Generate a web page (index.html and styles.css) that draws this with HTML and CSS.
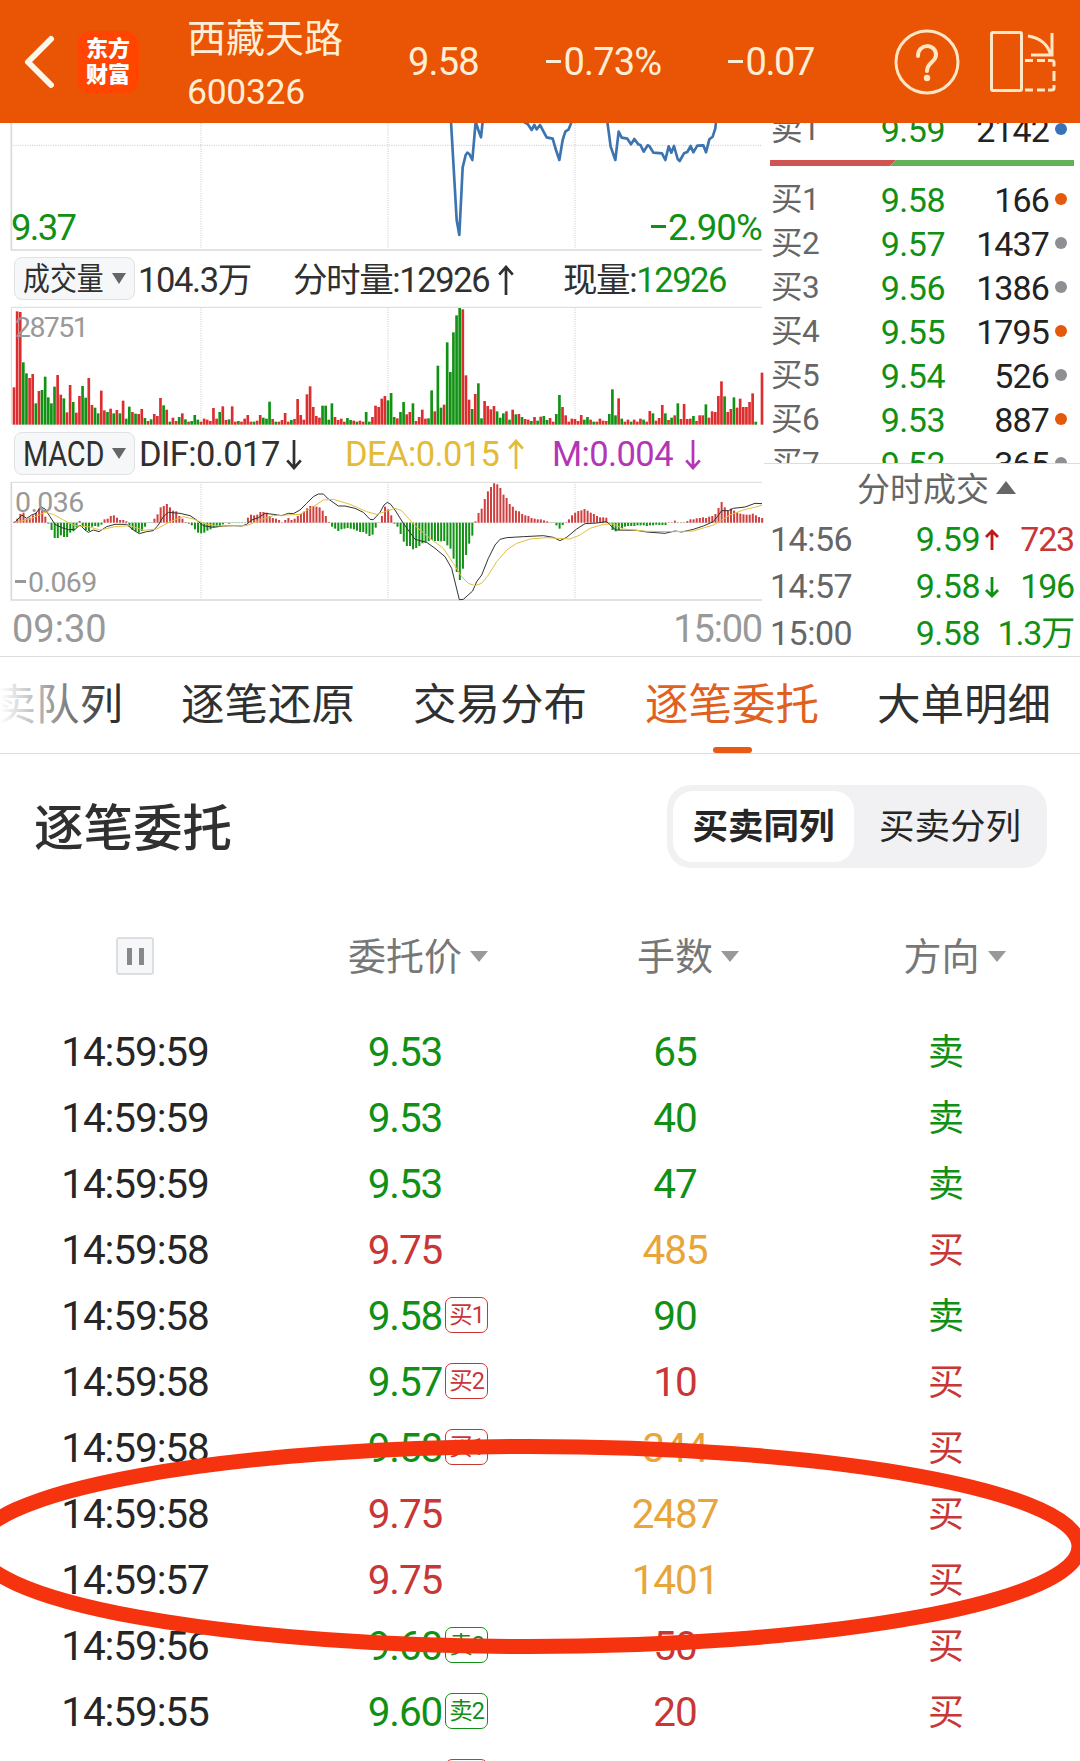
FILE: index.html
```html
<!DOCTYPE html>
<html lang="zh-CN">
<head>
    <meta charset="UTF-8">
    <meta name="viewport" content="width=device-width, initial-scale=1.0">
    <title>西藏天路 600326</title>
    <link rel="stylesheet" href="styles.css">
</head>
<body>
    <header class="header">
        <svg class="back" width="32" height="54" viewBox="0 0 32 54"><path d="M28 4 L5 27 L28 50"/></svg>
        <div class="logo"><span>东方</span><span>财富</span></div>
        <div class="stock">
            <div class="stock-name">西藏天路</div>
            <div class="stock-code">600326</div>
        </div>
        <div class="quote">
            <span class="q-price">9.58</span>
            <span class="q-pct"><i class="minus"></i>0.73%</span>
            <span class="q-diff"><i class="minus"></i>0.07</span>
        </div>
        <svg class="help" width="66" height="66" viewBox="0 0 66 66">
            <circle cx="33" cy="33" r="31"/>
            <path d="M24 27 C24 14 42 14 42 26 C42 33 33 33 33 42"/>
            <circle class="dot" cx="33" cy="49" r="3.2"/>
        </svg>
        <svg class="rotate" width="68" height="62" viewBox="0 0 68 62">
            <rect x="1.5" y="1.5" width="30" height="58" rx="1.5"/>
            <path d="M38 5 Q57 8 61 25 M62 2 V24 H41"/>
            <path d="M35 29.5 h8 M47 29.5 h8 M58 29.5 h4 q2 0 2 2 v4 M64 40 v10 M64 54 v3 q0 2 -2 2 h-4 M55 59 h-8 M43 59 h-8"/>
        </svg>
    </header>

    <section class="market">
        <div class="charts">
            <div class="chart price-chart">
                <svg width="764" height="128" viewBox="0 0 2292 384">
                    <g class="grid">
                        <path class="dotted" d="M33 67 H2286 M603 0 V378 M1164 0 V378 M1725 0 V378"/>
                        <path class="frame" d="M34 0 V381 H2286"/>
                    </g>
                    <g class="price-line" transform="translate(1140 -9)">
                        <path d="M213 5 L230 300 L238 345 L248 142 L257 105 L262 98 L268 102 L277 120 L287 5 L295 30 L303 52 L308 5"/>
                        <path d="M430 5 L443 12 L455 30 L463 15 L470 28 L480 15 L500 52 L518 56 L528 90 L538 120 L548 60 L556 35 L566 28 L575 5"/>
                        <path d="M682 5 L692 80 L706 120 L716 35 L725 53 L742 56 L753 73 L763 57 L775 73 L782 76 L791 95 L803 76 L808 78 L820 98 L846 100 L856 120 L866 79 L874 98 L882 78 L893 117 L899 123 L912 100 L922 96 L932 78 L940 97 L952 77 L970 76 L978 97 L988 58 L998 50 L1006 25 L1008 5"/>
                    </g>
                </svg>
                <span class="low">9.37</span>
                <span class="low-pct"><i class="minus"></i>2.90%</span>
            </div>

            <div class="info">
                <button class="picker"><span class="picker-cn">成交量</span><i class="tri"></i></button>
                <span class="vol-total">104.3万</span>
                <span class="vol-min">分时量:12926<svg class="arr" viewBox="0 0 18 32"><path d="M9 31 V2 M2 10 L9 2 L16 10"/></svg></span>
                <span class="vol-now">现量:<b>12926</b></span>
            </div>

            <div class="chart volume-chart">
                <svg width="764" height="120" viewBox="0 0 2292 360">
                    <path class="dotted" d="M603 4 V356 M1164 4 V356 M1725 4 V356"/>
                    <path class="frame thin" d="M34 356 V4 H2286"/>
                    <g id="volume"></g>
                </svg>
                <span class="scale-top">28751</span>
            </div>

            <div class="info macd-info">
                <button class="picker"><span class="picker-en">MACD</span><i class="tri"></i></button>
                <span class="dif">DIF:0.017<svg class="arr" viewBox="0 0 18 32"><path d="M9 1 V30 M2 22 L9 30 L16 22"/></svg></span>
                <span class="dea">DEA:0.015<svg class="arr" viewBox="0 0 18 32"><path d="M9 31 V2 M2 10 L9 2 L16 10"/></svg></span>
                <span class="macd-m">M:0.004<svg class="arr" viewBox="0 0 18 32"><path d="M9 1 V30 M2 22 L9 30 L16 22"/></svg></span>
            </div>

            <div class="chart macd-chart">
                <svg width="764" height="120" viewBox="0 168 2292 360">
                    <path class="dotted" d="M603 172 V525 M1164 172 V525 M1725 172 V525"/>
                    <path class="frame thin" d="M34 172 H2286"/>
                    <path class="frame" d="M34 172 V525 H2286"/>
                    <path class="zero" d="M42 293 H2286"/>
                    <g id="macd"></g>
                    <polyline class="dif-line" points="45,292 65,270 80,280 95,270 108,265 122,245 135,252 150,275 165,298 185,308 205,314 225,313 240,300 255,315 265,322 280,315 297,320 320,305 345,298 380,298 400,315 418,326 440,320 460,317 475,300 490,275 505,262 540,265 570,272 590,285 610,302 640,307 670,303 700,302 725,303 740,298 755,285 775,278 795,265 820,268 845,272 865,265 880,266 900,255 920,235 940,215 955,207 970,207 985,222 1015,243 1035,243 1065,250 1090,262 1110,283 1120,284 1140,262 1152,240 1162,232 1172,238 1185,255 1210,295 1245,343 1280,352 1305,370 1335,395 1355,430 1378,524 1390,523 1418,498 1430,470 1445,450 1465,400 1485,360 1500,343 1520,338 1570,335 1630,332 1660,337 1680,347 1700,337 1730,312 1755,296 1790,294 1820,290 1835,305 1848,315 1910,316 1940,321 1995,325 2025,318 2045,321 2080,313 2110,303 2140,290 2152,275 2165,257 2185,257 2200,250 2235,246 2265,235 2286,236"/>
                    <polyline class="dea-line" points="45,292 90,282 135,262 160,268 190,285 225,302 265,305 300,315 345,305 390,302 430,316 470,312 510,290 550,275 580,282 620,298 660,303 700,302 740,302 780,285 820,272 860,270 900,268 940,245 970,225 1000,223 1050,238 1100,260 1130,268 1165,257 1185,250 1205,257 1245,302 1290,340 1330,370 1360,415 1385,455 1405,475 1425,482 1445,475 1465,450 1490,410 1520,375 1550,355 1590,342 1640,338 1710,342 1740,330 1770,310 1810,298 1840,297 1870,312 1940,319 2020,320 2080,318 2140,300 2160,288 2190,270 2230,255 2286,241"/>
                </svg>
                <span class="scale-top">0.036</span>
                <span class="scale-bottom"><i class="minus"></i>0.069</span>
            </div>

            <div class="axis"><span>09:30</span><span>15:00</span></div>
        </div>

        <aside class="side">
            <div class="book">
                <div class="book-row sell"><span>卖1</span><span class="p">9.59</span><span class="n">2142</span><i class="mark blue"></i></div>
                <svg class="ratio" width="304" height="6" viewBox="0 0 304 6">
                    <path fill="#cf5452" d="M0 0 H126 L120 6 H0 Z"/>
                    <path fill="#63b257" d="M126 0 H304 V6 H120 Z"/>
                </svg>
                <div class="book-row"><span>买1</span><span class="p">9.58</span><span class="n">166</span><i class="mark orange"></i></div>
                <div class="book-row"><span>买2</span><span class="p">9.57</span><span class="n">1437</span><i class="mark"></i></div>
                <div class="book-row"><span>买3</span><span class="p">9.56</span><span class="n">1386</span><i class="mark"></i></div>
                <div class="book-row"><span>买4</span><span class="p">9.55</span><span class="n">1795</span><i class="mark orange"></i></div>
                <div class="book-row"><span>买5</span><span class="p">9.54</span><span class="n">526</span><i class="mark"></i></div>
                <div class="book-row"><span>买6</span><span class="p">9.53</span><span class="n">887</span><i class="mark orange"></i></div>
                <div class="book-row"><span>买7</span><span class="p">9.52</span><span class="n">365</span><i class="mark"></i></div>
            </div>
            <div class="deals">
                <div class="deals-title">分时成交<i class="tri-up"></i></div>
                <div class="deal"><span>14:56</span><span class="p">9.59</span><svg class="mini up" viewBox="0 0 16 22"><path d="M8 21 V2 M2 8 L8 2 L14 8"/></svg><span class="n red">723</span></div>
                <div class="deal"><span>14:57</span><span class="p">9.58</span><svg class="mini" viewBox="0 0 16 22"><path d="M8 1 V20 M2 14 L8 20 L14 14"/></svg><span class="n green">196</span></div>
                <div class="deal"><span>15:00</span><span class="p">9.58</span><i></i><span class="n green">1.3万</span></div>
            </div>
        </aside>
    </section>

    <nav class="tabs">
        <a>买卖队列</a>
        <a>逐笔还原</a>
        <a>交易分布</a>
        <a class="active">逐笔委托</a>
        <a>大单明细</a>
    </nav>

    <main class="orders">
        <div class="orders-head">
            <h2>逐笔委托</h2>
            <div class="switch">
                <span class="on">买卖同列</span>
                <span>买卖分列</span>
            </div>
        </div>
        <div class="columns">
            <div><button class="pause"><i></i><i></i></button></div>
            <div>委托价<i class="sort"></i></div>
            <div>手数<i class="sort"></i></div>
            <div>方向<i class="sort"></i></div>
        </div>
        <div class="list-wrap">
            <div id="list"></div>
            <svg class="circle" width="1080" height="240" viewBox="0 1426 1080 240">
                <ellipse cx="528" cy="1546.5" rx="551" ry="100"/>
            </svg>
        </div>
    </main>

    <script>
        // 每分钟成交量
        const volume = '112r 340r 338r 187g 154g 140r 152r 64g 101r 104g 144g 82g 64g 114g 149r 90r 79g 37r 119r 68g 36r 86r 116g 81g 140r 59r 51g 34g 102r 43r 38g 48r 34g 44r 34g 72r 18g 54g 38r 33g 32r 47r 20g 11r 16g 32r 26r 80r 58g 45r 9g 21r 11r 23g 34r 16g 9r 11g 29g 15g 9r 18r 15r 11r 50r 18r 38g 55r 14r 16g 55r 9r 11g 9r 18r 29r 9r 9g 12r 29r 21g 18g 69g 17r 9g 9r 14r 35r 9r 14g 17r 77r 29r 15r 91r 115r 53r 26r 21r 57g 57g 15g 64g 23r 14r 18r 9r 20g 14g 12r 9g 12r 9r 38g 9g 23r 57r 53r 78r 86r 73g 95g 23g 19r 38g 68g 31r 38r 64g 11r 23r 45r 18r 19g 103g 40r 177g 51g 60r 247g 158g 277g 328g 350g 346r 148r 75r 47g 92r 124g 19g 71r 56r 46r 56r 40g 21g 34g 40r 15g 45r 31g 32r 23g 17r 15r 11g 23r 12g 24r 26g 14g 20r 9r 32g 89g 53r 28r 9r 18r 17r 11r 29r 15g 23g 15r 9g 9r 18r 12r 11r 32g 106g 28g 79r 18g 9r 15r 9g 15r 9r 18r 15g 9r 41r 34g 12r 20r 59r 34g 14r 21g 28r 64g 17r 62r 17r 18r 26g 11r 28r 28r 61g 21r 40r 38r 86r 130r 85g 38r 47r 82g 51r 78r 53r 53r 68r 94r 9g 0r 156r'.split(' ');

        const macd = [
            3, 12, 26, 30, 12, 15, 22, 30, 42, 36, 18, -3, -22, -46, -46, -38, -43, -43, -30, -26,
            -14, 5, -12, -22, -25, -12, -10, -12, -6, 10, 12, 20, 22, 15, 8, 8, 4, -12, -22, -26,
            -30, -25, -12, -1, -1, 12, 25, 46, 50, 56, 46, 36, 34, 20, 12, 2, -3, -8, -20, -30,
            -32, -30, -24, -20, -14, -12, -10, -5, 1, -3, -1, -1, -1, -1, -1, 15, 24, 22, 24, 32,
            32, 30, 20, 14, 12, 8, 1, 8, 14, 8, 12, 20, 26, 33, 43, 50, 50, 48, 46, 36,
            20, 2, -12, -18, -25, -20, -18, -16, -18, -20, -24, -28, -28, -33, -40, -36, -15, 1, 20, 48,
            40, 22, -3, -12, -34, -57, -70, -70, -80, -76, -70, -62, -60, -55, -52, -55, -55, -56, -55, -68,
            -78, -108, -148, -172, -138, -97, -63, -39, 4, 29, 42, 71, 94, 107, 118, 115, 104, 84, 74, 56,
            48, 36, 34, 26, 22, 20, 14, 12, 10, 10, 7, 4, 1, -1, -8, -18, -7, 1, 10, 22,
            30, 35, 37, 41, 36, 30, 26, 20, 16, 16, 15, -3, -22, -26, -22, -16, -12, -10, -10, -10,
            -8, -8, -8, -10, -8, -8, -6, -7, -7, -7, 1, 1, 6, 1, -1, 1, 5, 10, 10, 13,
            14, 16, 14, 18, 20, 26, 44, 62, 46, 36, 42, 36, 30, 27, 25, 24, 24, 27, 22, 17, 14
        ];

        const step = 9.35;
        document.getElementById('volume').innerHTML = volume.map((v, i) => {
            const h = parseInt(v);
            const cls = v.endsWith('r') ? 'bar-up' : 'bar-down';
            return `<rect class="${cls}" x="${(38 + i * step).toFixed(1)}" y="${356 - h}" width="8" height="${h}"/>`;
        }).join('');

        document.getElementById('macd').innerHTML = macd.map((v, i) => {
            const y = v > 0 ? 293 - v : 293;
            return `<rect class="${v > 0 ? 'bar-up' : 'bar-down'}" x="${(39.5 + i * step).toFixed(1)}" y="${y}" width="6" height="${Math.abs(v)}"/>`;
        }).join('');

        // 时间, 价格, 价格颜色, 档位, 手数, 手数颜色, 方向
        const orders = [
            ['14:59:59', '9.53', 'green', '', '65', 'green', '卖'],
            ['14:59:59', '9.53', 'green', '', '40', 'green', '卖'],
            ['14:59:59', '9.53', 'green', '', '47', 'green', '卖'],
            ['14:59:58', '9.75', 'red', '', '485', 'gold', '买'],
            ['14:59:58', '9.58', 'green', '买1', '90', 'green', '卖'],
            ['14:59:58', '9.57', 'green', '买2', '10', 'red', '买'],
            ['14:59:58', '9.58', 'green', '买1', '344', 'gold', '买'],
            ['14:59:58', '9.75', 'red', '', '2487', 'gold', '买'],
            ['14:59:57', '9.75', 'red', '', '1401', 'gold', '买'],
            ['14:59:56', '9.60', 'green', '卖2', '50', 'red', '买'],
            ['14:59:55', '9.60', 'green', '卖2', '20', 'red', '买'],
            ['14:59:55', '9.58', 'green', '买1', '10', 'red', '买']
        ];

        document.getElementById('list').innerHTML = orders.map(o => `
            <div class="row">
                <span>${o[0]}</span>
                <span class="${o[2]}"><span class="price">${o[1]}${o[3] ? `<em class="tag ${o[3][0] === '买' ? 'red' : 'green'}">${o[3]}</em>` : ''}</span></span>
                <span class="${o[5]}">${o[4]}</span>
                <span class="side-cn ${o[6] === '买' ? 'red' : 'green'}">${o[6]}</span>
            </div>
        `).join('');
    </script>
</body>
</html>
```
FILE: styles.css
```css
* {
    box-sizing: border-box;
}
body {
    margin: 0;
    width: 1080px;
    height: 1761px;
    overflow: hidden;
    background: #fff;
    color: #262626;
    font-family: Roboto, "Noto Sans CJK SC", sans-serif;
}
i, em, b {
    font-style: normal;
    font-weight: normal;
}
svg {
    display: block;
    fill: none;
}
button {
    padding: 0;
    font-family: inherit;
    color: inherit;
}
.red { color: #c93636; }
.green { color: #109014; }
.gold { color: #e8a53a; }
.minus {
    display: inline-block;
    width: .39em;
    height: .085em;
    margin-right: .07em;
    background: currentColor;
    vertical-align: .31em;
}

/* 顶部 */
.header {
    display: flex;
    align-items: center;
    height: 123px;
    padding-left: 23px;
    background: #e95504;
    color: #ffeed6;
}
.back path {
    stroke: #fff6ea;
    stroke-width: 6;
    stroke-linecap: round;
    stroke-linejoin: round;
}
.logo {
    display: flex;
    flex-direction: column;
    align-items: center;
    justify-content: center;
    width: 62px;
    height: 62px;
    margin-left: 22px;
    border-radius: 14px;
    background: #ff4500;
    color: #fff;
    font-size: 22px;
    font-weight: 900;
    line-height: 27px;
}
.logo span {
    margin-top: -1px;
}
.stock {
    width: 220px;
    margin-left: 48px;
    padding-top: 13px;
}
.stock-name {
    font-size: 39px;
    line-height: 48px;
}
.stock-code {
    font-size: 35.5px;
    line-height: 59px;
    letter-spacing: -.3px;
}
.quote {
    display: flex;
    width: 487px;
    padding-left: 1px;
    font-size: 38px;
    letter-spacing: -.8px;
}
.q-price { width: 138px; }
.q-pct { width: 182px; }
.q-diff { letter-spacing: -1.4px; }
.help circle, .help path {
    stroke: #ffe6c4;
    stroke-width: 3;
}
.help path { stroke-width: 4; stroke-linecap: round; }
.help .dot {
    fill: #ffe6c4;
    stroke: none;
}
.rotate {
    margin-left: 30px;
}
.rotate rect, .rotate path {
    stroke: #ffe6c4;
    stroke-width: 3;
}

/* 行情 */
.market {
    display: flex;
    height: 534px;
    border-bottom: 1px solid #ddd;
}
.charts {
    width: 764px;
}
.chart {
    position: relative;
}
.chart span {
    position: absolute;
    line-height: 1;
}
.frame {
    stroke: #d9d9d9;
    stroke-width: 5;
}
.frame.thin { stroke-width: 3; }
.dotted {
    stroke: #c8c8c8;
    stroke-width: 3;
    stroke-dasharray: 3 4;
}
.price-line path {
    stroke: #3c74b0;
    stroke-width: 8;
    stroke-linejoin: round;
}
.chart .low, .chart .low-pct {
    bottom: 5px;
    color: #109014;
    font-size: 36.5px;
    letter-spacing: -.8px;
}
.chart .low {
    left: 11px;
    letter-spacing: -1.7px;
}
.low-pct { right: 2px; }
.info {
    display: flex;
    align-items: center;
    height: 55px;
    padding-left: 14px;
    font-size: 34.5px;
    letter-spacing: -1.4px;
    white-space: nowrap;
    color: #303030;
}
.info > span {
    margin-top: -4px;
}
.macd-info {
    letter-spacing: -.6px;
}
.macd-info > span {
    margin-top: 0;
}
.picker {
    display: flex;
    align-items: center;
    width: 121px;
    height: 43px;
    padding-left: 8px;
    border: 1px solid #dfe1e5;
    border-radius: 8px;
    background: #f6f7f9;
    font-size: 33px;
    line-height: 40px;
}
.picker-cn, .picker-en {
    width: 89px;
    text-align: left;
    transform-origin: left;
}
.picker-cn {
    font-size: 32px;
    transform: scaleX(.84);
}
.picker-en {
    font-size: 34.5px;
    transform: scaleX(.84);
    letter-spacing: -.3px;
}
.tri {
    border: 7px solid transparent;
    border-top: 11px solid #666;
    border-bottom: 0;
}
.vol-total { width: 155px; margin-left: 3px; }
.vol-min { width: 270px; }
.vol-now b { color: #109014; }
.dif { width: 206px; margin-left: 4px; }
.dea { width: 207px; color: #e3bb35; }
.macd-m { color: #b436b8; }
.arr {
    display: inline-block;
    width: 18px;
    height: 31px;
    margin-left: 8px;
    vertical-align: -4px;
}
.dif .arr { margin-left: 5px; }
.macd-m .arr { margin-left: 11px; }
.arr path, .mini path {
    stroke: currentColor;
    stroke-width: 2.8;
}
.bar-up { fill: #dc2e2e; }
.bar-down { fill: #129214; }
#macd .bar-up { fill: #cf3f3f; }
.chart .scale-top, .chart .scale-bottom {
    left: 15px;
    color: #999;
    font-size: 28.5px;
    letter-spacing: -.6px;
}
.volume-chart .scale-top { letter-spacing: -1.6px; }
.scale-top { top: 8px; }
.scale-bottom { bottom: 4px; }
.zero {
    stroke: #bbb;
    stroke-width: 2;
    stroke-dasharray: 4 5;
}
.dif-line { stroke: #333; stroke-width: 3; }
.dea-line { stroke: #e2c040; stroke-width: 3; }
.axis {
    display: flex;
    justify-content: space-between;
    padding: 5px 2px 0 12px;
    color: #999;
    font-size: 38px;
    line-height: 46px;
}
.axis span:last-child {
    letter-spacing: -1.2px;
}

/* 盘口 */
.side {
    width: 316px;
    color: #666;
    font-size: 34px;
    letter-spacing: -.5px;
}
.book {
    height: 341px;
    padding-left: 6px;
    overflow: hidden;
    border-bottom: 1px solid #ddd;
}
.book-row {
    display: grid;
    grid-template-columns: 71px 104px 104px 12px;
    align-items: center;
    height: 44px;
    line-height: 44px;
}
.book-row > span:first-child {
    padding-left: 1px;
    font-size: 31.5px;
}
.book-row.sell { margin-top: -15px; }
.ratio { margin: 8px 0 12px; }
.p, .n { text-align: right; }
.p { color: #109014; }
.book .n {
    color: #222;
    letter-spacing: -.9px;
}
.mark {
    width: 12px;
    height: 12px;
    margin: -2px 0 0 6px;
    border-radius: 50%;
    background: #8e8e93;
}
.orange { background: #e45a0c; }
.blue { background: #3873b9; }
.deals-title {
    display: flex;
    align-items: center;
    height: 46px;
    margin-bottom: 6px;
    padding-left: 93px;
    font-size: 33px;
    letter-spacing: 0;
}
.tri-up {
    margin-left: 7px;
    border: 10px solid transparent;
    border-bottom: 13px solid #666;
    border-top: 0;
}
.deal {
    display: grid;
    grid-template-columns: 100px 110px 22px 72px;
    align-items: center;
    height: 47px;
    padding-left: 6px;
    line-height: 47px;
    white-space: nowrap;
}
.deal .n {
    display: flex;
    justify-content: flex-end;
    letter-spacing: -1.2px;
}
.mini {
    width: 16px;
    height: 22px;
    margin-left: 4px;
    color: #109014;
}
.mini.up { color: #c01818; }

/* 标签栏 */
.tabs {
    position: relative;
    display: flex;
    gap: 58px;
    height: 97px;
    border-bottom: 1px solid #ddd;
    font-size: 43.5px;
    line-height: 98px;
    color: #303030;
}
.tabs a {
    position: relative;
    flex: none;
    height: 96px;
}
.tabs a:first-child { margin-left: -51px; }
.tabs .active { color: #e0611f; }
.tabs .active::after {
    content: "";
    position: absolute;
    left: 68px;
    bottom: 0;
    width: 39px;
    height: 6px;
    border-radius: 3px;
    background: #e85a14;
}
.tabs::before {
    content: "";
    position: absolute;
    z-index: 1;
    left: 0;
    top: 0;
    width: 110px;
    height: 90px;
    background: linear-gradient(90deg, #fff, rgba(255,255,255,0));
}

/* 逐笔委托 */
.orders-head {
    display: flex;
    justify-content: space-between;
    align-items: center;
    padding: 31px 33px 0 34px;
}
.orders-head h2 {
    margin: 0;
    padding-top: 5px;
    color: #303030;
    font-size: 49.5px;
    font-weight: 500;
    line-height: 78px;
}
.switch {
    display: flex;
    width: 380px;
    height: 83px;
    padding: 6px;
    border-radius: 24px;
    background: #f1f1f3;
    font-size: 35.5px;
    line-height: 73px;
    text-align: center;
}
.switch span {
    flex: 1;
    padding-left: 5px;
}
.switch .on {
    flex: none;
    width: 181px;
    height: 71px;
    padding-left: 0;
    border-radius: 20px;
    background: #fff;
    font-weight: bold;
}
.columns, .row {
    display: grid;
    grid-template-columns: repeat(4, 1fr);
    align-items: center;
    text-align: center;
}
.columns {
    height: 78px;
    margin-top: 49px;
    color: #777;
    font-size: 38px;
    line-height: 52px;
}
.columns div {
    display: flex;
    justify-content: center;
    align-items: center;
}
.columns div + div {
    margin-top: 2px;
    padding-left: 26px;
}
.columns div:last-child { padding-left: 19px; }
.sort {
    margin: -1px 0 0 8px;
    border: 9px solid transparent;
    border-top: 11px solid #999;
    border-bottom: 0;
}
.pause {
    display: flex;
    justify-content: center;
    align-items: center;
    gap: 7px;
    width: 38px;
    height: 38px;
    border: 2px solid #dcdee1;
    border-radius: 3px;
    background: #f6f7f9;
}
.pause i {
    width: 5px;
    height: 17px;
    background: #888;
}
.list-wrap {
    position: relative;
    padding-top: 24px;
}
.row {
    height: 66px;
    font-size: 40.5px;
    letter-spacing: -1.1px;
}
.price {
    position: relative;
}
.tag {
    position: absolute;
    left: 100%;
    top: 5px;
    margin-left: 3px;
    padding: 0 3px;
    height: 36px;
    border: 1.5px solid currentColor;
    border-radius: 7px;
    font-size: 23.5px;
    line-height: 34px;
    white-space: nowrap;
}
.side-cn {
    margin-top: -7px;
    padding-left: 2px;
    font-size: 36px;
    letter-spacing: 0;
}
.circle {
    position: absolute;
    left: 0;
    top: 431px;
}
.circle ellipse {
    stroke: #f5330f;
    stroke-width: 15;
}
```
